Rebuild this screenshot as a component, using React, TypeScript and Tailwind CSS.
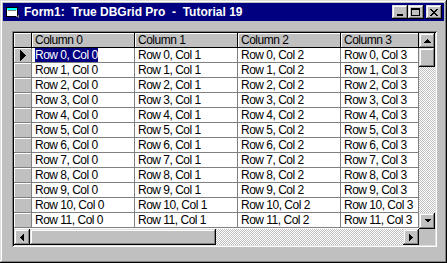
import React from 'react';

const rows = Array.from({ length: 12 }, (_, i) => i);
const colWidths = ['w-[103px]', 'w-[103px]', 'w-[103px]', 'w-[78px]'];

const raised =
  'bg-[#c0c0c0] shadow-[inset_-1px_-1px_#000,inset_1px_1px_#dfdfdf,inset_-2px_-2px_#808080,inset_2px_2px_#fff]';
const checker =
  'bg-[conic-gradient(#fff_25%,#c0c0c0_0_50%,#fff_0_75%,#c0c0c0_0)] bg-[length:2px_2px]';

function Arrow({ dir }: { dir: 'up' | 'down' | 'left' | 'right' }) {
  const pts = {
    up: '3.5,0 0,3.5 7,3.5',
    down: '0,0 7,0 3.5,3.5',
    left: '3.5,0 3.5,7 0,3.5',
    right: '0,0 0,7 3.5,3.5',
  }[dir];
  const vertical = dir === 'up' || dir === 'down';
  return (
    <svg width={vertical ? 7 : 4} height={vertical ? 4 : 7} viewBox={vertical ? '0 0 7 4' : '0 0 4 7'}>
      <polygon points={pts} fill="#000" shapeRendering="crispEdges" />
    </svg>
  );
}

function ScrollButton({ dir, className = '' }: { dir: 'up' | 'down' | 'left' | 'right'; className?: string }) {
  return (
    <div className={`${raised} flex items-center justify-center w-[16px] ${className}`}>
      <Arrow dir={dir} />
    </div>
  );
}

function CaptionButton({ kind }: { kind: 'min' | 'max' | 'close' }) {
  return (
    <div className={`${raised} w-[16px] h-[14px] flex items-center justify-center`}>
      {kind === 'min' && <div className="w-[6px] h-[2px] bg-black mt-[6px] mr-[1px]" />}
      {kind === 'max' && <div className="w-[9px] h-[8px] border border-black border-t-2 mr-[1px]" />}
      {kind === 'close' && (
        <svg width="8" height="7" viewBox="0 0 8 7" shapeRendering="crispEdges">
          <path d="M0 0h2v1h-2zM6 0h2v1h-2zM1 1h2v1h-2zM5 1h2v1h-2zM2 2h4v1h-4zM3 3h2v1h-2zM2 4h4v1h-4zM1 5h2v1h-2zM5 5h2v1h-2zM0 6h2v1h-2zM6 6h2v1h-2z" fill="#000" />
        </svg>
      )}
    </div>
  );
}

function FormIcon() {
  return (
    <svg width="16" height="16" viewBox="0 0 16 16" shapeRendering="crispEdges">
      <path d="M1 3h11v9H1z" fill="#fff" stroke="#000" strokeWidth="1" transform="translate(0.5 0.5)" />
      <path d="M2 4h10v2H2z" fill="#00ffff" />
      <path d="M3 6h8v1H3z" fill="#808080" />
      <path d="M11 12h3v1h-3zM13 11h1v3h-1z" fill="#808080" />
    </svg>
  );
}

export default function App() {
  return (
    <div className="w-[447px] h-[263px] bg-[#c0c0c0] p-[3px] flex flex-col font-['Liberation_Sans',Arial,sans-serif] shadow-[inset_-1px_-1px_#000,inset_1px_1px_#dfdfdf,inset_-2px_-2px_#808080,inset_2px_2px_#fff]">
      {/* title bar */}
      <div className="h-[18px] bg-[#000080] flex items-center pl-[2px] pr-[2px]">
        <FormIcon />
        <span className="ml-[3px] text-white font-bold text-[12px] leading-none whitespace-pre">
          {'Form1:  True DBGrid Pro  -  Tutorial 19'}
        </span>
        <div className="ml-auto flex items-center">
          <CaptionButton kind="min" />
          <CaptionButton kind="max" />
          <div className="ml-[2px]">
            <CaptionButton kind="close" />
          </div>
        </div>
      </div>

      {/* grid */}
      <div className="mt-[10px] ml-[9px] w-[425px] h-[216px] p-[2px] bg-[#c0c0c0] flex flex-col shadow-[inset_1px_1px_#808080,inset_-1px_-1px_#fff,inset_2px_2px_#000,inset_-2px_-2px_#dfdfdf] text-[12px] tracking-[-0.5px] text-black">
        <div className="flex h-[196px]">
          <div className="w-[405px] flex flex-col bg-white">
            {/* header */}
            <div className="flex h-[15px] shrink-0">
              <div className="w-[18px] bg-[#c0c0c0] border-r border-b border-black shadow-[inset_1px_1px_#fff]" />
              {colWidths.map((w, c) => (
                <div
                  key={c}
                  className={`${w} bg-[#c0c0c0] border-r border-b border-black shadow-[inset_1px_1px_#fff] pl-[3px] leading-[14px] whitespace-nowrap overflow-hidden`}
                >
                  Column {c}
                </div>
              ))}
            </div>
            {rows.map((r) => (
              <div key={r} className="flex h-[15px] shrink-0">
                <div className="w-[18px] bg-[#c0c0c0] border-r border-b border-[#808080] shadow-[inset_1px_1px_#fff] flex items-center justify-center">
                  {r === 0 && (
                    <svg width="6" height="11" viewBox="0 0 6 11" shapeRendering="crispEdges">
                      <polygon points="0,0 6,5.5 0,11" fill="#000" />
                    </svg>
                  )}
                </div>
                {colWidths.map((w, c) => (
                  <div
                    key={c}
                    className={`${w} border-r border-b border-[#808080] pl-[3px] leading-[14px] whitespace-nowrap overflow-hidden`}
                  >
                    {r === 0 && c === 0 ? (
                      <span className="bg-[#000080] text-white">Row 0, Col 0</span>
                    ) : (
                      `Row ${r}, Col ${c}`
                    )}
                  </div>
                ))}
              </div>
            ))}
          </div>
          {/* vertical scrollbar */}
          <div className="w-[16px] flex flex-col">
            <ScrollButton dir="up" className="h-[15px]" />
            <div className={`${raised} h-[19px]`} />
            <div className={`flex-1 ${checker}`} />
            <ScrollButton dir="down" className="h-[16px]" />
          </div>
        </div>
        <div className="flex h-[16px]">
          <ScrollButton dir="left" />
          <div className={`${raised} w-[186px]`} />
          <div className={`w-[187px] ${checker}`} />
          <ScrollButton dir="right" />
          <div className="w-[16px] bg-[#c0c0c0]" />
        </div>
      </div>
    </div>
  );
}
